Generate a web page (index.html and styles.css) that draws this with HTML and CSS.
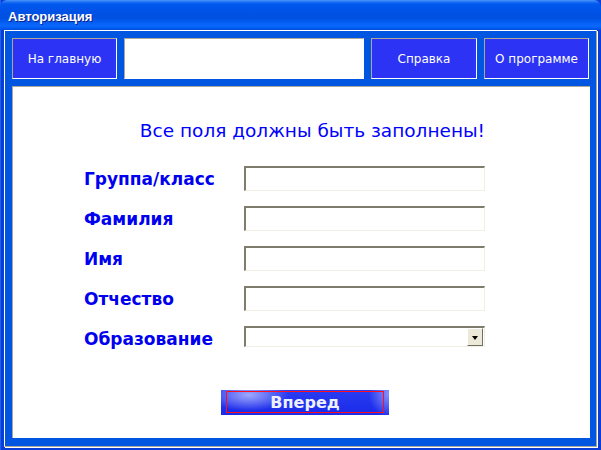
FILE: index.html
```html
<!doctype html>
<html lang="ru">
  <head>
    <meta charset="UTF-8" />
    <title>Авторизация</title>
    <link rel="stylesheet" href="styles.css">
  </head>
  <body>
    <div class="window">
      <!-- Title bar -->
      <div class="titlebar"><span class="title">Авторизация</span></div>

      <div class="frameset">
        <!-- Top frame: navigation -->
        <div class="nav">
          <div class="nav-cell nav-link nav-home">На главную</div>
          <div class="nav-cell nav-blank"></div>
          <div class="nav-cell nav-link nav-help">Справка</div>
          <div class="nav-cell nav-link nav-about">О программе</div>
        </div>

        <!-- Main frame: form -->
        <div class="main">
          <div class="form">
            <div class="notice">Все поля должны быть заполнены!</div>
            <div class="fields">
              <label class="field-label">Группа/класс</label>
              <input class="field-input" type="text">
              <label class="field-label">Фамилия</label>
              <input class="field-input" type="text">
              <label class="field-label">Имя</label>
              <input class="field-input" type="text">
              <label class="field-label">Отчество</label>
              <input class="field-input" type="text">
              <label class="field-label">Образование</label>
              <div class="field-select">
                <div class="select-arrow"></div>
              </div>
            </div>
            <div class="btn"><span class="btn-inner">Вперед</span></div>
          </div>
        </div>
      </div>
    </div>
  </body>
</html>
```

FILE: styles.css
```css
/* Page */
body {
  margin: 0;
  background: #fff;
}

.window {
  width: 601px;
  height: 450px;
  display: flex;
  flex-direction: column;
  background: #0a3cd6;
  box-shadow: inset 1px 0 0 #1a62f0;
  overflow: hidden;
}

/* Title bar */
.titlebar {
  height: 30px;
  flex: none;
  box-sizing: border-box;
  padding: 3px 0 0 8px;
  display: flex;
  align-items: center;
  border-radius: 7px 7px 0 0;
  background: linear-gradient(to bottom,
    #4a98fa 0px, #1f70f4 2px, #0058ee 4px, #0052e6 12px,
    #0050e0 18px, #0660f5 23px, #0a68ff 26px, #0056e8 29px, #0048d8 30px);
}

.title {
  color: #fff;
  font-family: "Liberation Sans", Arial, sans-serif;
  font-weight: bold;
  font-size: 13px;
  text-shadow: 1px 1px 0 #0a1f8a;
}

/* Frameset */
.frameset {
  flex: 1;
  margin: 0 4px 3px 4px;
  display: flex;
  flex-direction: column;
  background: #0055e1;
  border: 1px solid;
  border-color: #fff #aca899 #aca899 #fff;
  box-shadow: 1px 1px 0 #fff;
}

/* Navigation frame */
.nav {
  flex: none;
  display: flex;
  gap: 7px;
  padding: 7px 6px 7px 7px;
}

.nav-cell {
  box-sizing: border-box;
  height: 41px;
  border: 1px solid;
  border-color: #aca899 #fff #fff #aca899;
}

.nav-link {
  display: flex;
  align-items: center;
  justify-content: center;
  background: #2c33f4;
  color: #fff;
  font-family: "DejaVu Sans", Verdana, sans-serif;
  font-size: 12px;
}

.nav-home { width: 105px; }
.nav-blank { width: 240px; background: #fff; }
.nav-help { width: 106px; }
.nav-about { width: 105px; }

/* Main frame */
.main {
  flex: 1;
  margin: 0 6px 8px 7px;
  background: #fff;
  border-top: 1px solid #aca899;
  border-left: 1px solid #aca899;
  padding: 33px 0 0 71px;
}

.form {
  width: 401px;
}

.notice {
  text-align: right;
  color: #0000ff;
  font-family: "DejaVu Sans", Verdana, sans-serif;
  font-size: 18.5px;
  line-height: 22px;
}

.fields {
  margin-top: 24px;
  display: grid;
  grid-template-columns: 160px 241px;
  grid-auto-rows: 25px;
  row-gap: 15px;
  align-items: center;
}

.field-label {
  color: #0000ee;
  font-family: "DejaVu Sans", Verdana, sans-serif;
  font-weight: bold;
  font-size: 17px;
}

.field-input,
.field-select {
  box-sizing: border-box;
  width: 241px;
  margin: 0;
  padding: 0;
  background: #fff;
  border-style: solid;
  border-width: 2px 1px 1px 2px;
  border-color: #7e7c6c #f1efe2 #f1efe2 #7e7c6c;
  outline: none;
}

.field-input {
  height: 25px;
}

.field-select {
  height: 21px;
  align-self: start;
  display: flex;
  justify-content: flex-end;
  padding: 0 1px 0 0;
}

.select-arrow {
  box-sizing: border-box;
  width: 16px;
  height: 18px;
  background: #ece9d8;
  border: 1px solid;
  border-color: #fff #716f64 #716f64 #fff;
  display: flex;
  align-items: center;
  justify-content: center;
}

.select-arrow::after {
  content: "";
  border-left: 3px solid transparent;
  border-right: 3px solid transparent;
  border-top: 4px solid #000;
  margin-top: 1px;
}

/* Submit button */
.btn {
  box-sizing: border-box;
  width: 168px;
  height: 25px;
  margin: 39px 0 0 137px;
  padding: 1px 5px 2px 5px;
  display: flex;
  background:
    radial-gradient(ellipse 40px 16px at 28px 5px, rgba(200, 206, 255, 0.75), rgba(200, 206, 255, 0) 100%),
    radial-gradient(ellipse 20px 24px at 100% 15%, rgba(170, 178, 255, 0.75), rgba(170, 178, 255, 0) 100%),
    linear-gradient(to bottom, #2a3cf2, #1a2ae8);
}

.btn-inner {
  flex: 1;
  display: flex;
  align-items: center;
  justify-content: center;
  border: 1px solid #ff1020;
  color: #eef0ff;
  font-family: "DejaVu Sans", Verdana, sans-serif;
  font-weight: bold;
  font-size: 16px;
}
```
